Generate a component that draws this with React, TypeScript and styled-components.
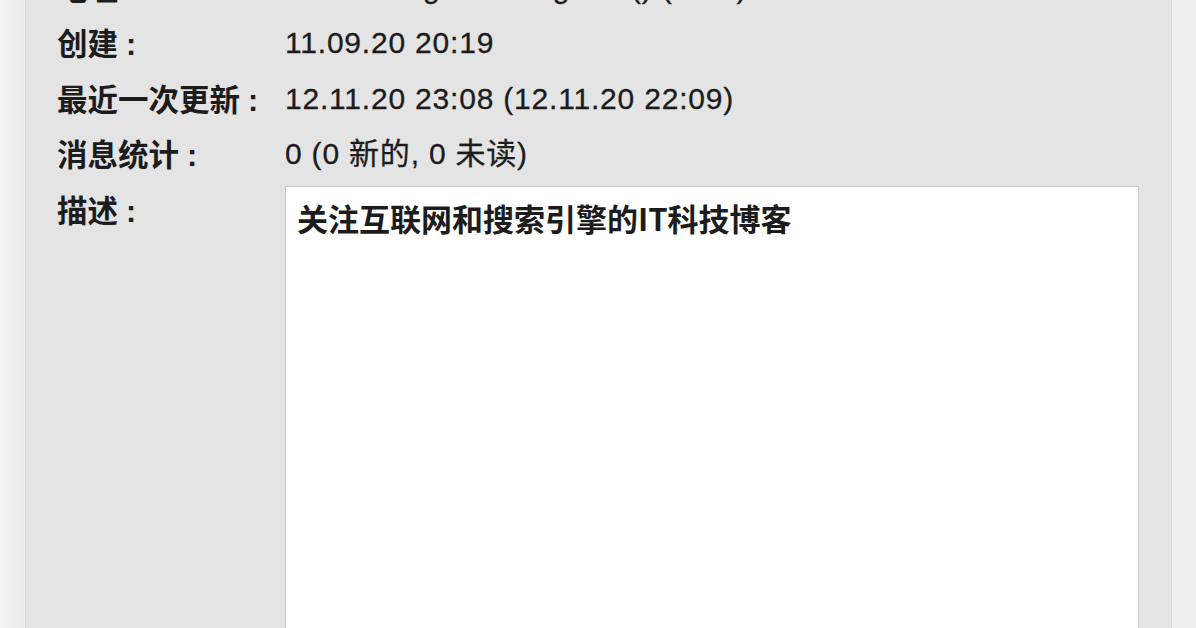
import styled, { createGlobalStyle } from "styled-components";

const GlobalStyle = createGlobalStyle`
  html, body {
    margin: 0;
    padding: 0;
    height: 100%;
    overflow: hidden;
  }

  body {
    background-color: #f0f0f0;
    font-family: "Liberation Sans", "Noto Sans CJK SC", sans-serif;
    color: #1c1c1c;
  }
`;

const Page = styled.div`
  height: 628px;
  overflow: hidden;
  padding: 0 24px 0 25px;
  background: linear-gradient(
    to right,
    #f4f4f4 0px,
    #ececec 20px,
    #f0f0f0 1172px,
    #efefef 100%
  );
`;

const Panel = styled.section`
  display: flex;
  flex-direction: column;
  height: 700px;
  margin-top: -40.5px;
  padding: 0 33px 0 32px;
  background-color: #e4e4e4;
  box-shadow: inset 1px 0 0 #dcdcdc, inset -1px 0 0 #dcdcdc;
`;

const Row = styled.div<{ $tall?: boolean }>`
  display: grid;
  grid-template-columns: 228px 1fr;
  align-items: start;
  height: ${(p) => (p.$tall ? "auto" : "55.5px")};
  line-height: 55.5px;
`;

const Label = styled.div`
  font-family: "Noto Sans CJK SC", sans-serif;
  font-size: 30.5px;
  font-weight: 600;
  white-space: nowrap;
`;

const Colon = styled.span`
  margin-left: 8px;
  font-family: "Liberation Sans", sans-serif;
  font-weight: 700;
`;

const Value = styled.div`
  font-family: "Liberation Sans", "Noto Sans CJK SC", sans-serif;
  font-size: 30px;
  letter-spacing: 0.8px;
  white-space: nowrap;
  -webkit-text-stroke: 0.3px #1c1c1c;
`;

const TextBox = styled.div`
  box-sizing: border-box;
  height: 520px;
  margin-top: 4.5px;
  padding: 11px 11px;
  background-color: #ffffff;
  border: 1px solid #c6c6c6;
  border-right-color: #d2d2d2;
  font-family: "Noto Sans CJK SC", sans-serif;
  font-size: 31px;
  font-weight: 600;
  line-height: 40px;
`;

const rows = [
  { label: "地址", value: "williamlong.info/blog/rss () (RSS)" },
  { label: "创建", value: "11.09.20 20:19" },
  { label: "最近一次更新", value: "12.11.20 23:08 (12.11.20 22:09)" },
  { label: "消息统计", value: "0 (0 新的, 0 未读)" },
];

function App() {
  return (
    <>
      <GlobalStyle />
      <Page>
        <Panel>
          {rows.map((r) => (
            <Row key={r.label}>
              <Label>
                {r.label}
                <Colon>:</Colon>
              </Label>
              <Value>{r.value}</Value>
            </Row>
          ))}
          <Row $tall>
            <Label>
              描述
              <Colon>:</Colon>
            </Label>
            <TextBox>关注互联网和搜索引擎的IT科技博客</TextBox>
          </Row>
        </Panel>
      </Page>
    </>
  );
}

export default App;
